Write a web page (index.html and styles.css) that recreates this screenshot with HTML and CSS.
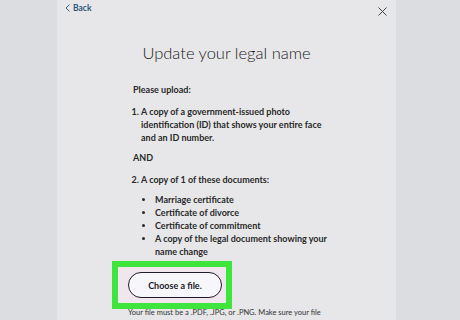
FILE: index.html
```html
<!DOCTYPE html>
<html lang="en">
<head>
    <meta charset="UTF-8">
    <meta name="viewport" content="width=device-width, initial-scale=1.0">
    <title>Update your legal name</title>
    <link rel="stylesheet" href="styles.css">
</head>
<body>

<div class="panel">
    <div class="topbar">
        <a class="back" href="#">
            <svg width="5" height="8" viewBox="0 0 5 8"><path d="M4.5 0.5 L1 4 L4.5 7.5" fill="none" stroke="#3a5f80" stroke-width="1"/></svg>
            Back
        </a>
        <svg class="close" width="9" height="9" viewBox="0 0 9 9"><path d="M0.5 0.5 L8.5 8.5 M8.5 0.5 L0.5 8.5" stroke="#444" stroke-width="1"/></svg>
    </div>

    <h1>Update your legal name</h1>

    <div class="content">
        <p class="lead">Please upload:</p>

        <ol class="steps">
            <li>A copy of a government-issued photo identification (ID) that shows your entire face and an ID number.</li>
        </ol>

        <p class="and">AND</p>

        <ol class="steps" start="2">
            <li>A copy of 1 of these documents:
                <ul class="docs">
                    <li>Marriage certificate</li>
                    <li>Certificate of divorce</li>
                    <li>Certificate of commitment</li>
                    <li>A copy of the legal document showing your name change</li>
                </ul>
            </li>
        </ol>

        <div class="highlight">
            <button>Choose a file.</button>
        </div>

        <p class="note">Your file must be a .PDF, .JPG, or .PNG. Make sure your file name is less than 40 characters and your file size is less than 10MB.</p>
    </div>
</div>

</body>
</html>
```

FILE: styles.css
```css
body {
    margin: 0;
    padding: 0;
    background-color: #dcdde1;
    font-family: Lato, "Open Sans", sans-serif;
    color: #222;
    overflow: hidden;
}
.panel {
    width: 339px;
    height: 320px;
    overflow: hidden;
    margin-left: 57px;
    background-color: #e7e7e9;
}
.topbar {
    display: flex;
    justify-content: space-between;
    align-items: flex-start;
    padding: 3px 9px 0 8px;
    height: 14px;
}
.back {
    display: flex;
    align-items: center;
    gap: 3px;
    color: #2f5878;
    font-size: 8.5px;
    font-weight: 700;
    text-decoration: none;
}
.close {
    margin-top: 4px;
}
h1 {
    margin: 26px 0 0;
    text-align: center;
    font-size: 16.5px;
    font-weight: 300;
    color: #1a1a1a;
}
.content {
    width: 200px;
    padding-left: 76px;
    font-size: 9px;
    line-height: 13px;
    font-weight: 700;
    color: #2a2a2a;
}
.content p {
    margin: 0;
}
.lead {
    padding-top: 20px;
}
.steps {
    margin: 9px 0 0;
    padding-left: 8px;
}
.and {
    padding-top: 7px;
}
.docs {
    margin: 7px 0 0;
    padding-left: 14px;
    list-style: disc;
}
.highlight {
    margin: 3px 0 0 -21px;
    width: 98px;
    padding: 5px 0 5px 10px;
    border: 6px solid #3fe43c;
    background-color: #f1e6ee;
}
.highlight button {
    width: 94px;
    height: 26px;
    border: 1.5px solid #1e1e2a;
    border-radius: 13px;
    background-color: #f7f6fb;
    font-family: Lato, sans-serif;
    font-size: 9px;
    font-weight: 700;
    color: #1a1a2a;
    cursor: pointer;
}
.content .note {
    margin: -2px 0 0 -5px;
    width: 205px;
    font-weight: 400;
    font-size: 7.5px;
    line-height: 11px;
    color: #333;
}
```
